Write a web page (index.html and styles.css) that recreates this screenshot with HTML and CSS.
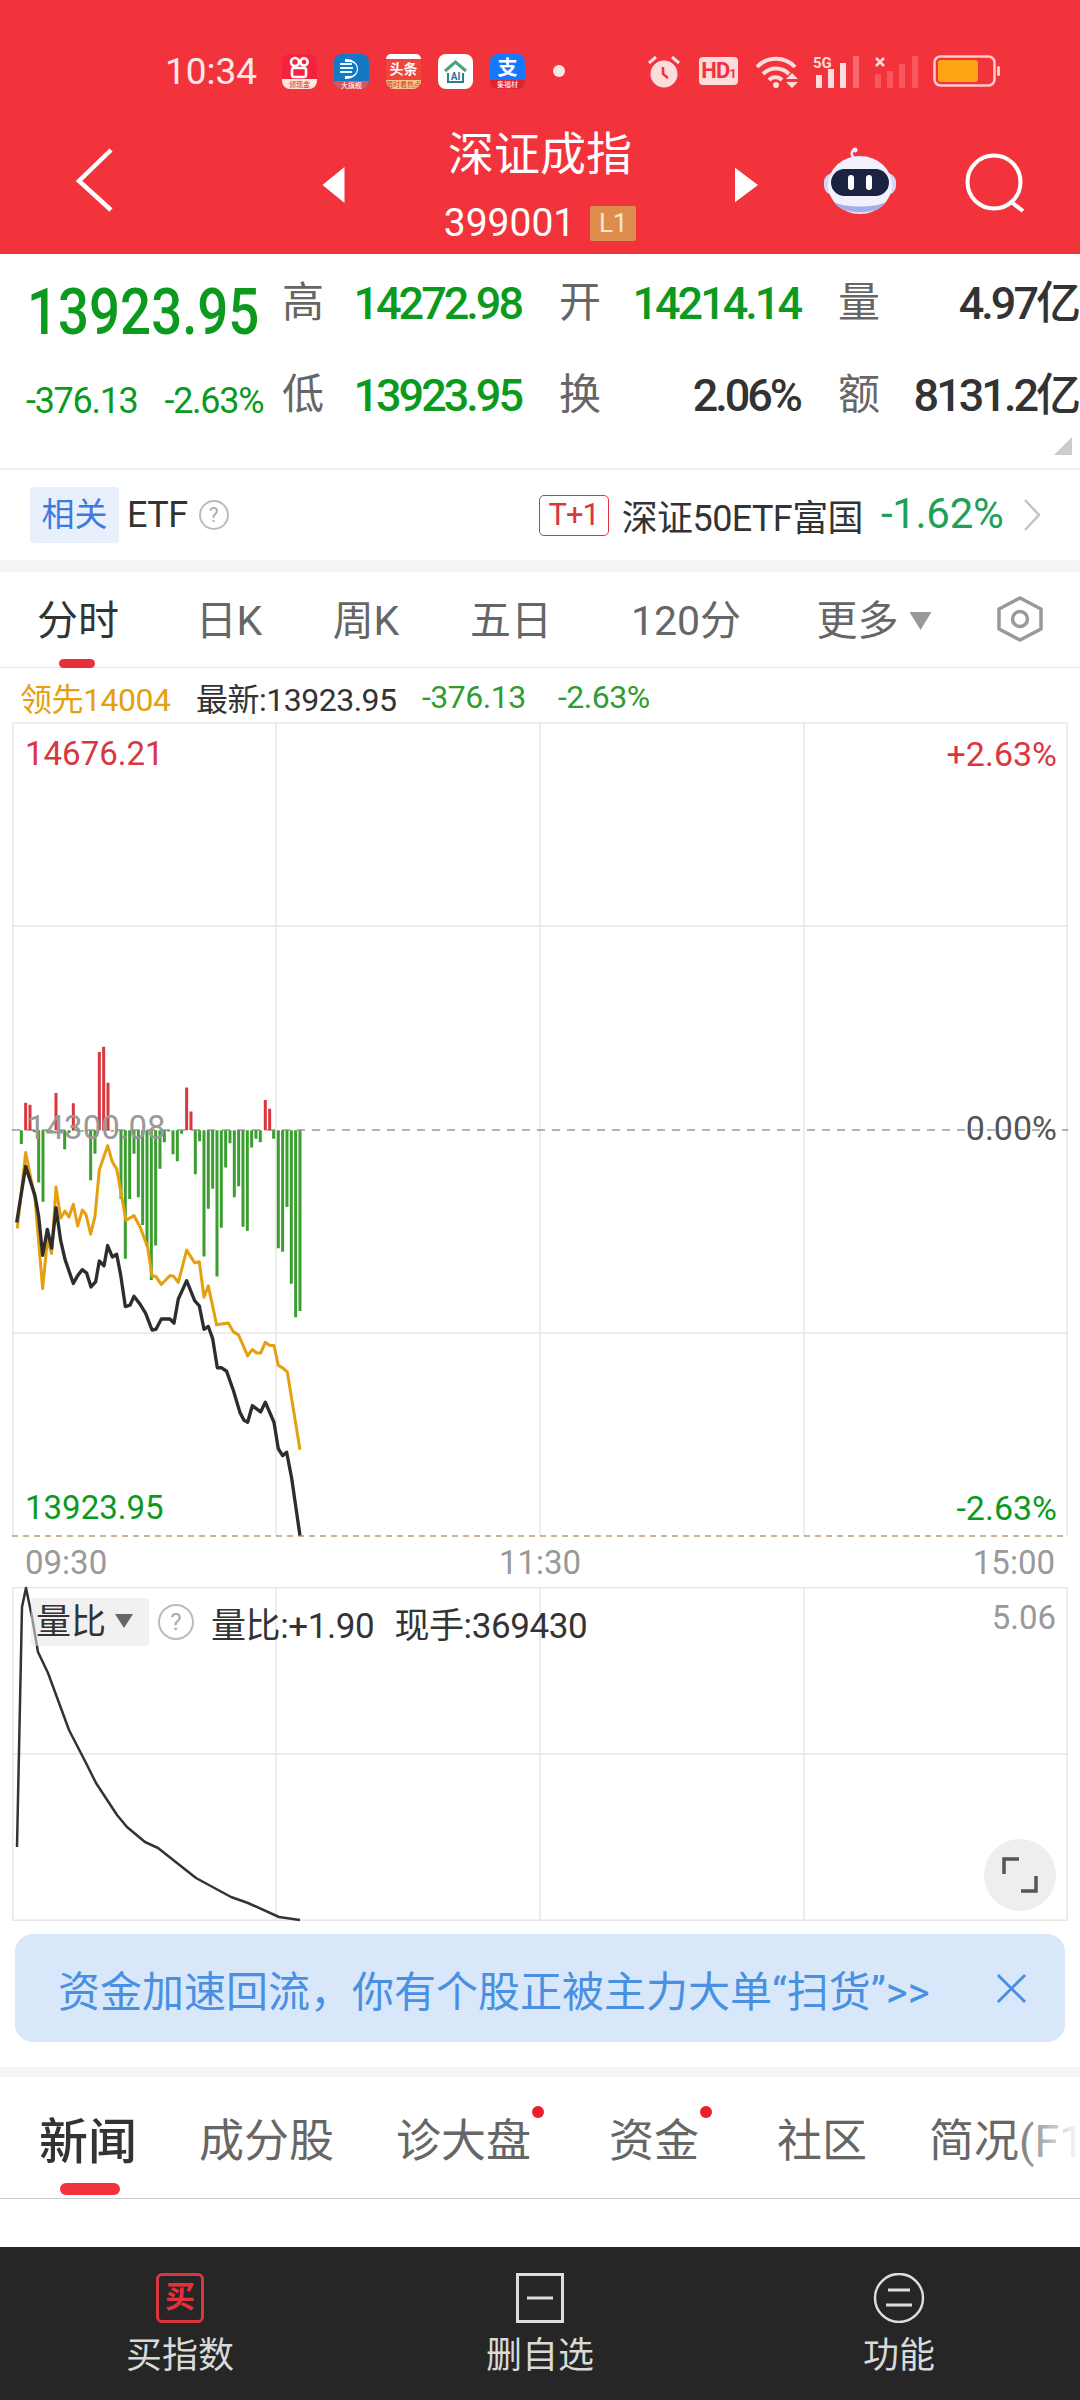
FILE: index.html
```html
<!DOCTYPE html>
<html lang="zh-CN">
<head>
<meta charset="utf-8">
<title>深证成指</title>
<link rel="stylesheet" href="styles.css">
</head>
<body>
<div class="page">
  <header class="hero">
    <div class="status">
      <span class="time">10:34</span>
      <div class="apps">
        <svg class="app" viewBox="0 0 35 35"><rect width="35" height="35" rx="8" fill="#f5223f"/><path d="M0 25h35v2a8 8 0 0 1-8 8H8a8 8 0 0 1-8-8z" fill="#fde9d9"/><circle cx="13" cy="8" r="4" fill="none" stroke="#fff" stroke-width="2.6"/><circle cx="22" cy="8" r="3.6" fill="none" stroke="#fff" stroke-width="2.6"/><rect x="10" y="14" width="14" height="9" rx="2" fill="none" stroke="#fff" stroke-width="2.6"/><text x="17.500" y="33" class="app-tx" fill="#d8202f">领现金</text></svg>
        <svg class="app" viewBox="0 0 35 35"><rect width="35" height="35" rx="8" fill="#1478c4"/><path d="M0 27h35a8 8 0 0 1-8 8H8a8 8 0 0 1-8-8z" fill="#e2505a"/><path d="M13 5a11 10 0 1 1 0 20h-2v-3h5a7 7 0 0 0 0-14h-5V5z" fill="#fff"/><path d="M6 10h12M6 14h13M6 18h12" stroke="#dff" stroke-width="2"/><text x="17.500" y="33.500" class="app-tx" fill="#fff">大旗舰</text></svg>
        <svg class="app" viewBox="0 0 35 35"><rect width="35" height="35" rx="8" fill="#f0453a"/><path d="M5 0h25a5 5 0 0 1 5 5H0a5 5 0 0 1 5-5z" fill="#fff"/><path d="M0 26h35v1a8 8 0 0 1-8 8H8a8 8 0 0 1-8-8z" fill="#f9c98a"/><text x="17.500" y="20" class="app-big" fill="#fff">头条</text><text x="17.500" y="33" class="app-tx" fill="#c33">限时看热点</text></svg>
        <svg class="app" viewBox="0 0 35 35"><rect width="35" height="35" rx="8" fill="#fff"/><path d="M7 17 17.500 8 28 17" fill="none" stroke="#4aa37c" stroke-width="3"/><path d="M10 19v9h15v-9" fill="none" stroke="#2f7f8a" stroke-width="2"/><text x="17.500" y="26" class="app-tx2" fill="#2a6fa8">AI</text></svg>
        <svg class="app" viewBox="0 0 35 35"><rect width="35" height="35" rx="8" fill="#1677ff"/><path d="M0 26h35v1a8 8 0 0 1-8 8H8a8 8 0 0 1-8-8z" fill="#e8202a"/><text x="17.500" y="21" class="app-big2" fill="#fff">支</text><text x="17.500" y="33" class="app-tx" fill="#fff">集福材</text></svg>
      </div>
      <span class="dot"></span>
      <div class="sys">
        <svg class="alarm" viewBox="0 0 32 33"><circle cx="16" cy="19" r="13.500" fill="#fcdcdc"/><path d="M1 8 8 2M31 8l-7-6" stroke="#fcdcdc" stroke-width="3"/><path d="M15 12v7l5 4" fill="none" stroke="#f3333c" stroke-width="2.500"/></svg>
        <span class="hd">HD<small>1</small></span>
        <svg class="wifi" viewBox="0 0 44 33"><g fill="none" stroke="#fcdcdc" stroke-width="4"><path d="M1 12a26 26 0 0 1 38 0"/><path d="M7 19a18 18 0 0 1 26 0"/><path d="M13 25a9 9 0 0 1 13 0"/></g><circle cx="20" cy="30" r="3" fill="#fcdcdc"/><path d="M30 24h12l-6-6zM30 27h12l-6 6z" fill="#fcdcdc"/></svg>
        <svg class="sig" viewBox="0 0 47 33"><text x="0" y="13" class="sig-t" fill="#fcdcdc">5G</text><rect x="3" y="20" width="6" height="13" fill="#fcdcdc"/><rect x="15" y="14" width="6" height="19" fill="#fcdcdc"/><rect x="27" y="8" width="6" height="25" fill="#fcdcdc"/><rect x="40" y="1" width="6" height="32" fill="#fa6a70"/></svg>
        <svg class="sig2" viewBox="0 0 45 33"><path d="M1 3l8 8M9 3l-8 8" stroke="#fcdcdc" stroke-width="2.500"/><rect x="0" y="19" width="6" height="14" fill="#f8575e"/><rect x="12" y="16" width="6" height="17" fill="#f8575e"/><rect x="24" y="9" width="6" height="24" fill="#f8575e"/><rect x="37" y="1" width="6" height="32" fill="#f8575e"/></svg>
        <svg class="bat" viewBox="0 0 67 32"><rect x="1.500" y="1.500" width="60" height="29" rx="6" fill="none" stroke="#fcc" stroke-width="2.500"/><rect x="5" y="5" width="40" height="22" rx="3" fill="#ffa414"/><rect x="64" y="11" width="3" height="10" rx="1.500" fill="#fcc"/></svg>
      </div>
    </div>
    <nav class="nav">
      <svg class="back" viewBox="0 0 37 64"><path d="M35 2 3 33l32 29" fill="none" stroke="#fff" stroke-width="4.500"/></svg>
      <svg class="tri" viewBox="0 0 22 36"><path d="M22 0v36L0 18z" fill="#fff"/></svg>
      <div class="title">
        <div class="name">深证成指</div>
        <div class="code"><span>399001</span><span class="lv">L1</span></div>
      </div>
      <svg class="tri" viewBox="0 0 24 36"><path d="M0 0v36l24-18z" fill="#fff"/></svg>
      <svg class="robot" viewBox="0 0 72 68"><path d="M30 11c-4-3-2-9 1-8" fill="none" stroke="#e6e8fb" stroke-width="2.500"/><circle cx="31" cy="3" r="2.500" fill="#e6e8fb"/><rect x="0" y="26" width="72" height="22" rx="9" fill="#d5d8f5"/><ellipse cx="36" cy="38" rx="32" ry="29" fill="#f1f2fd"/><path d="M10 55c8 14 44 14 52 0-10 6-42 6-52 0z" fill="#a7adea"/><rect x="7" y="22" width="58" height="27" rx="13.500" fill="#1c2340"/><rect x="24" y="28" width="6" height="15" rx="3" fill="#fff"/><rect x="42" y="28" width="6" height="15" rx="3" fill="#fff"/></svg>
      <svg class="search" viewBox="0 0 60 60"><circle cx="29" cy="29" r="26.500" fill="none" stroke="#fff" stroke-width="4"/><path d="M45 48 58 58" stroke="#fff" stroke-width="4"/></svg>
    </nav>
  </header>

  <section class="quote">
    <div class="q-left">
      <div class="big">13923.95</div>
      <div class="chg"><span>-376.13</span><span>-2.63%</span></div>
    </div>
    <div class="q-grid">
      <span class="lb">高</span><span class="val up">14272.98</span>
      <span class="lb">开</span><span class="val up">14214.14</span>
      <span class="lb">量</span><span class="val">4.97亿</span>
      <span class="lb">低</span><span class="val up">13923.95</span>
      <span class="lb">换</span><span class="val">2.06%</span>
      <span class="lb">额</span><span class="val">8131.2亿</span>
    </div>
    <span class="corner"></span>
  </section>

  <section class="etf">
    <span class="rel">相关</span>
    <span class="etf-n">ETF</span>
    <span class="qm etf-q">?</span>
    <span class="t1">T+1</span>
    <span class="etf-name">深证50ETF富国</span>
    <span class="etf-pct">-1.62%</span>
    <svg class="etf-ch" viewBox="0 0 18 34"><path d="M2 2l14 15L2 32" fill="none" stroke="#c4c4c4" stroke-width="2.500"/></svg>
  </section>
  <div class="band"></div>

  <section class="periods">
    <span class="p on">分时</span>
    <span class="p">日K</span>
    <span class="p">周K</span>
    <span class="p">五日</span>
    <span class="p">120分</span>
    <span class="p">更多<i class="caret"></i></span>
    <svg class="gear" viewBox="0 0 46 46"><path d="M23 2 44 13V33L23 44 2 33V13z" fill="none" stroke="#999" stroke-width="3.500" stroke-linejoin="round"/><circle cx="23" cy="23" r="7.500" fill="none" stroke="#999" stroke-width="3.500"/></svg>
  </section>

  <section class="info">
    <span class="lead">领先14004</span>
    <span class="latest">最新:13923.95</span>
    <span class="gr">-376.13</span>
    <span class="gr">-2.63%</span>
  </section>

  <section class="chart">
    <svg class="plot" viewBox="0 0 1056 813">
      <g class="grid">
        <path d="M0.750 0H1055.250M0 203H1056M0 610H1056M0.750 0V813M264 0V813M528 0V813M792 0V813M1055.250 0V813"/>
      </g>
      <path class="zero" d="M0 407H1056"/>
      <path class="floor" d="M0 813H1056"/>
      <g transform="translate(-12 297) scale(.3333 .3444)">
        <path class="bar-r" d="M77 320V240M90 320V246M168 320V212M220 320V242M298 320V93M311 320V78M324 320V182M560 320V196M573 320V266M796 320V232M809 320V258"/>
        <path class="bar-g" d="M64 320V360M103 320V326M116 320V472M129 320V528M142 320V326M155 320V324M181 320V324M194 320V375M207 320V328M233 320V324M246 320V324M259 320V326M272 320V465M285 320V388M337 320V324M350 320V326M363 320V520M376 320V693M389 320V520M402 320V388M415 320V515M428 320V595M441 320V657M454 320V755M467 320V655M480 320V432M493 320V355M506 320V324M519 320V390M532 320V410M545 320V330M586 320V448M599 320V352M612 320V687M625 320V548M638 320V490M651 320V745M664 320V603M677 320V428M690 320V358M703 320V515M716 320V483M729 320V600M742 320V612M755 320V370M768 320V345M781 320V355M821 320V345M835 320V663M848 320V673M861 320V543M874 320V766M887 320V863M900 320V845"/>
        <polyline class="avg" points="52,605 77,385 105,520 128,780 142,640 155,678 168,485 182,575 195,555 207,572 220,535 233,598 247,552 258,565 272,622 285,570 298,435 323,365 337,412 350,432 378,582 402,568 420,600 443,660 456,743 468,745 484,768 510,742 522,745 535,762 560,668 584,705 598,702 612,805 625,772 650,885 685,880 700,905 716,915 743,975 757,957 770,967 782,967 796,936 810,945 822,945 835,1003 848,1010 862,1022 900,1248"/>
        <polyline class="price" points="50,588 77,425 105,510 116,570 128,683 142,608 155,662 168,545 182,640 195,695 220,765 233,742 247,725 260,735 273,775 287,760 298,700 312,714 323,655 337,688 350,680 362,740 376,832 390,828 402,802 420,825 437,852 456,900 468,898 484,868 510,868 522,880 535,810 560,757 584,815 598,830 612,898 625,890 638,925 652,1010 665,1010 680,1020 700,1075 720,1140 732,1162 743,1168 757,1120 782,1138 796,1110 822,1168 835,1245 848,1265 860,1255 875,1330 900,1497"/>
      </g>
    </svg>
    <span class="lbl tl red">14676.21</span>
    <span class="lbl tr red">+2.63%</span>
    <span class="lbl ml">14300.08</span>
    <span class="lbl mr">0.00%</span>
    <span class="lbl bl grn">13923.95</span>
    <span class="lbl br grn">-2.63%</span>
  </section>

  <div class="axis"><span>09:30</span><span>11:30</span><span>15:00</span></div>

  <section class="sub">
    <svg class="plot" viewBox="0 0 1056 334">
      <g class="grid"><path d="M0 0.750H1056M0 167H1056M0 333.250H1056M0.750 0V334M264 0V334M528 0V334M792 0V334M1055.250 0V334"/></g>
      <polyline class="ratio" points="5,260 10,20 14,1 20,30 26,65 36,86 57,143 74,176 84,196 105,228 115,240 133,255 146,261 184,291 219,310 236,316 267,330 288,333"/>
    </svg>
    <div class="legend">
      <span class="sel">量比<i class="caret dark"></i></span>
      <span class="qm sub-q">?</span>
      <span class="leg-t">量比:+1.90</span>
      <span class="leg-t">现手:369430</span>
    </div>
    <span class="max">5.06</span>
    <span class="expand"><svg viewBox="0 0 36 36"><path d="M2 17V2h15M34 19v15H19" fill="none" stroke="#555" stroke-width="3.500"/></svg></span>
  </section>

  <section class="banner">
    <span class="ban-t">资金加速回流，你有个股正被主力大单“扫货”&gt;&gt;</span>
    <svg class="ban-x" viewBox="0 0 32 32"><path d="M2 2l28 28M30 2 2 30" fill="none" stroke="#4a90e2" stroke-width="3"/></svg>
  </section>
  <div class="band band2"></div>

  <section class="news">
    <span class="n on">新闻</span>
    <span class="n">成分股</span>
    <span class="n badge">诊大盘</span>
    <span class="n badge">资金</span>
    <span class="n">社区</span>
    <span class="n">简况(F10)</span>
  </section>
  <div class="fill"></div>

  <footer class="foot">
    <div class="f">
      <span class="buy">买</span>
      <span>买指数</span>
    </div>
    <div class="f">
      <svg class="f-ic" viewBox="0 0 48 50"><rect x="1.500" y="1.500" width="45" height="47" fill="none" stroke="#ddd" stroke-width="3"/><path d="M11 25h26" stroke="#ddd" stroke-width="3"/></svg>
      <span>删自选</span>
    </div>
    <div class="f">
      <svg class="f-ic" viewBox="0 0 52 50"><circle cx="26" cy="25" r="24" fill="none" stroke="#ddd" stroke-width="2.500"/><path d="M15 17h22M13 32h26" stroke="#ddd" stroke-width="3"/></svg>
      <span>功能</span>
    </div>
  </footer>
</div>
</body>
</html>
```

FILE: styles.css
```css
* { box-sizing: border-box; }
html, body { margin: 0; padding: 0; }
body { background: #fff; font-family: Roboto, "Noto Sans CJK SC", sans-serif; color: #333; }
.page { width: 1080px; height: 2400px; overflow: hidden; display: flex; flex-direction: column; }

/* header */
.hero { height: 254px; background: #f3333c; color: #fff; flex: none; }
.status { height: 100px; margin-top: 21px; display: flex; align-items: center; padding-left: 165px; }
.time { font-size: 37px; width: 117px; color: #fbe9e9; }
.apps { display: flex; gap: 17px; }
.app { width: 35px; height: 35px; display: block; overflow: visible; }
.app-tx { font: 7px "Noto Sans CJK SC", sans-serif; text-anchor: middle; }
.app-tx2 { font: 700 10px Roboto, sans-serif; text-anchor: middle; }
.app-big { font: 700 14px "Noto Sans CJK SC", sans-serif; text-anchor: middle; }
.app-big2 { font: 700 20px "Noto Sans CJK SC", sans-serif; text-anchor: middle; }
.dot { width: 12px; height: 12px; border-radius: 50%; background: #fde6e6; margin-left: 28px; }
.sys { display: flex; align-items: center; margin-left: 83px; height: 36px; }
.alarm { width: 32px; height: 33px; }
.hd { width: 39px; height: 28px; margin-left: 19px; background: #fcdcdc; color: #f3333c; border-radius: 4px; font-size: 22px; font-weight: 700; line-height: 28px; text-align: center; letter-spacing: -1px; }
.hd small { font-size: 13px; }
.wifi { width: 44px; height: 33px; margin-left: 18px; }
.sig { width: 47px; height: 33px; margin-left: 13px; overflow: visible; }
.sig-t { font: 700 15px Roboto, sans-serif; }
.sig2 { width: 45px; height: 33px; margin-left: 15px; }
.bat { width: 67px; height: 32px; margin-left: 13px; }

.nav { height: 133px; display: flex; align-items: center; padding-left: 76px; }
.back { width: 37px; height: 64px; margin-top: -16px; margin-right: 209px; }
.tri { width: 23px; height: 36px; margin-top: -6px; }
.title { width: 390px; height: 133px; display: flex; flex-direction: column; align-items: center; padding-top: 5px; }
.name { font-size: 46px; line-height: 56px; height: 77px; }
.code { display: flex; align-items: center; gap: 15px; font-size: 39px; line-height: 40px; }
.lv { width: 46px; height: 35px; background: #de8c4b; color: #fbe6d6; border-radius: 2px; font-size: 26px; line-height: 35px; text-align: center; }
.robot { width: 72px; height: 68px; margin-left: 66px; margin-top: -14px; }
.search { width: 60px; height: 60px; margin-left: 69px; margin-top: -10px; }

/* quote */
.quote { height: 216px; flex: none; position: relative; display: flex; border-bottom: 2px solid #eee; }
.q-left { width: 282px; padding-left: 27px; }
.big { font-size: 65px; font-weight: 500; color: #0b9a1e; line-height: 70px; margin-top: 23px; transform: scaleX(.84); transform-origin: 0 50%; white-space: nowrap; }
.chg { display: flex; gap: 27px; margin-top: 36px; margin-left: -1px; font-size: 36px; line-height: 36px; color: #0b9a1e; letter-spacing: -1.3px; white-space: nowrap; }
.q-grid { display: grid; grid-template-columns: 40px 199px 80px 199px 80px 198px; grid-auto-rows: 92px; margin-top: 3px; }
.q-grid .lb { font-size: 42px; color: #666; line-height: 92px; text-align: right; white-space: nowrap; }
.q-grid .val { font-size: 45px; line-height: 94px; text-align: right; font-weight: 500; letter-spacing: -3px; color: #333; white-space: nowrap; }
.q-grid .val.up { color: #0b9a1e; }
.corner { position: absolute; right: 8px; top: 183px; width: 18px; height: 18px; background: #ccc; clip-path: polygon(100% 0, 100% 100%, 0 100%); }

/* etf */
.etf { height: 90px; flex: none; display: flex; align-items: center; padding-left: 30px; }
.rel { width: 89px; height: 56px; background: #e8f0fc; color: #3d7be0; border-radius: 4px; font-size: 33px; line-height: 56px; text-align: center; }
.etf-n { font-size: 36px; margin-left: 8px; letter-spacing: -.5px; }
.qm { display: inline-block; border: 2px solid #bbb; border-radius: 50%; color: #aaa; text-align: center; }
.etf-q { width: 30px; height: 30px; margin-left: 11px; font-size: 20px; line-height: 26px; }
.t1 { width: 70px; height: 41px; margin-left: 310px; border: 1.5px solid #d9363e; border-radius: 5px; color: #d9363e; font-size: 31px; line-height: 38px; text-align: center; letter-spacing: -1px; }
.etf-name { font-size: 36px; margin-left: 13px; letter-spacing: -.6px; white-space: nowrap; }
.etf-pct { font-size: 42px; color: #1e9f5a; margin-left: 18px; letter-spacing: -.3px; margin-top: -3px; }
.etf-ch { width: 18px; height: 34px; margin-left: 20px; }
.band { height: 12px; background: #f4f4f4; flex: none; }

/* periods */
.periods { height: 96px; flex: none; display: grid; grid-template-columns: 156px 146px 128px 162px 188px 188px 112px; align-items: center; justify-items: center; border-bottom: 1.5px solid #e6e6e6; font-size: 41px; color: #666; }
.p { position: relative; height: 96px; line-height: 98px; display: block; white-space: nowrap; }
.p.on { color: #333; }
.p.on::after { content: ""; position: absolute; left: 22px; bottom: 0; width: 36px; height: 9px; border-radius: 5px; background: #e8303a; }
.caret { display: inline-block; width: 22px; height: 18px; margin-left: 11px; background: #999; clip-path: polygon(0 0, 100% 0, 50% 100%); vertical-align: 5px; }
.caret.dark { width: 18px; height: 14px; background: #666; margin-left: 9px; vertical-align: 6px; }
.gear { width: 46px; height: 46px; margin-left: -8px; margin-top: -2px; }

/* info */
.info { height: 55px; flex: none; display: flex; align-items: center; padding-left: 20px; padding-top: 2px; font-size: 32px; letter-spacing: -.5px; white-space: nowrap; }
.lead { color: #e5a00f; width: 176px; }
.latest { width: 226px; color: #333; }
.gr { color: #2f9c2f; width: 136px; }

/* chart */
.chart { width: 1056px; height: 813px; flex: none; margin-left: 12px; position: relative; }
.plot { position: absolute; inset: 0; width: 100%; height: 100%; display: block; overflow: visible; }
.grid path { fill: none; stroke: #e6e6e6; stroke-width: 1.5; }
.zero { stroke: #999; stroke-width: 1.5; stroke-dasharray: 8 7; fill: none; }
.floor { stroke: #c9b48f; stroke-width: 2; stroke-dasharray: 6 5; fill: none; }
.bar-r { stroke: #d9363e; stroke-width: 9; fill: none; }
.bar-g { stroke: #3c9e30; stroke-width: 9; fill: none; }
.avg { fill: none; stroke: #e5a00f; stroke-width: 9; stroke-linejoin: round; }
.price { fill: none; stroke: #2d2d2d; stroke-width: 10; stroke-linejoin: round; }
.lbl { position: absolute; font-size: 34px; line-height: 40px; white-space: nowrap; }
.tl { left: 13px; top: 11px; font-size: 33px; }
.tr { right: 11px; top: 11px; }
.ml { left: 15px; top: 385px; color: #999; font-size: 33px; }
.mr { right: 11px; top: 385px; color: #555; }
.bl { left: 13px; top: 765px; font-size: 33px; }
.br { right: 11px; top: 765px; }
.red { color: #d9363e; }
.grn { color: #0b9a1e; }
.axis { height: 51px; flex: none; display: flex; justify-content: space-between; align-items: center; padding: 2px 25px 0; font-size: 33px; color: #999; }

/* sub chart */
.sub { width: 1056px; height: 334px; flex: none; margin-left: 12px; position: relative; }
.ratio { fill: none; stroke: #333; stroke-width: 2.5; stroke-linejoin: round; }
.legend { position: absolute; left: 19px; top: 11px; display: flex; align-items: center; height: 48px; }
.sel { width: 118px; height: 48px; background: rgba(230,230,230,.55); border-radius: 4px; padding-left: 5px; font-size: 35px; line-height: 50px; white-space: nowrap; }
.sub-q { width: 36px; height: 36px; margin-left: 9px; font-size: 24px; line-height: 32px; }
.leg-t { font-size: 35px; margin-left: 17px; letter-spacing: -.4px; white-space: nowrap; }
.leg-t + .leg-t { margin-left: 20px; }
.max { position: absolute; right: 12px; top: 11px; font-size: 33px; color: #999; line-height: 40px; }
.expand { position: absolute; left: 972px; top: 252px; width: 72px; height: 72px; border-radius: 50%; background: #eee; display: flex; align-items: center; justify-content: center; }
.expand svg { width: 36px; height: 36px; }

/* banner */
.banner { height: 108px; flex: none; margin: 13px 15px 0; background: #d8e7fa; border-radius: 18px; display: flex; align-items: center; padding-left: 43px; }
.ban-t { font-size: 42px; color: #4a90e2; white-space: nowrap; }
.ban-x { width: 31px; height: 31px; margin-left: 66px; }
.band2 { height: 10px; margin-top: 25px; }

/* news tabs */
.news { height: 122px; flex: none; position: relative; display: flex; gap: 62px; padding-left: 39px; align-items: center; border-bottom: 1.5px solid #ccc; font-size: 45px; color: #666; white-space: nowrap; overflow: hidden; }
.news::after { content: ""; position: absolute; right: 0; top: 0; bottom: 0; width: 70px; background: linear-gradient(to right, rgba(255,255,255,0), #fff); }
.n { position: relative; flex: none; }
.n.on { font-size: 49px; color: #333; font-weight: 500; }
.n.on::after { content: ""; position: absolute; left: 21px; top: 81px; width: 60px; height: 12px; border-radius: 6px; background: #f3333c; }
.n.badge { padding-right: 16px; }
.n.badge::before { content: ""; position: absolute; right: 3px; top: 1px; width: 12px; height: 12px; border-radius: 50%; background: #e8202a; }
.fill { flex: 1; }

/* footer */
.foot { height: 153px; flex: none; background: #262626; display: grid; grid-template-columns: 360px 360px 358px; color: #d9d9d9; font-size: 36px; }
.f { display: flex; flex-direction: column; align-items: center; padding-top: 26px; gap: 8px; line-height: 50px; }
.f-ic { height: 50px; display: block; }
.buy { width: 48px; height: 50px; border: 3px solid #d9363e; border-radius: 6px; color: #e8303a; font-size: 30px; font-weight: 700; line-height: 42px; text-align: center; }
```
